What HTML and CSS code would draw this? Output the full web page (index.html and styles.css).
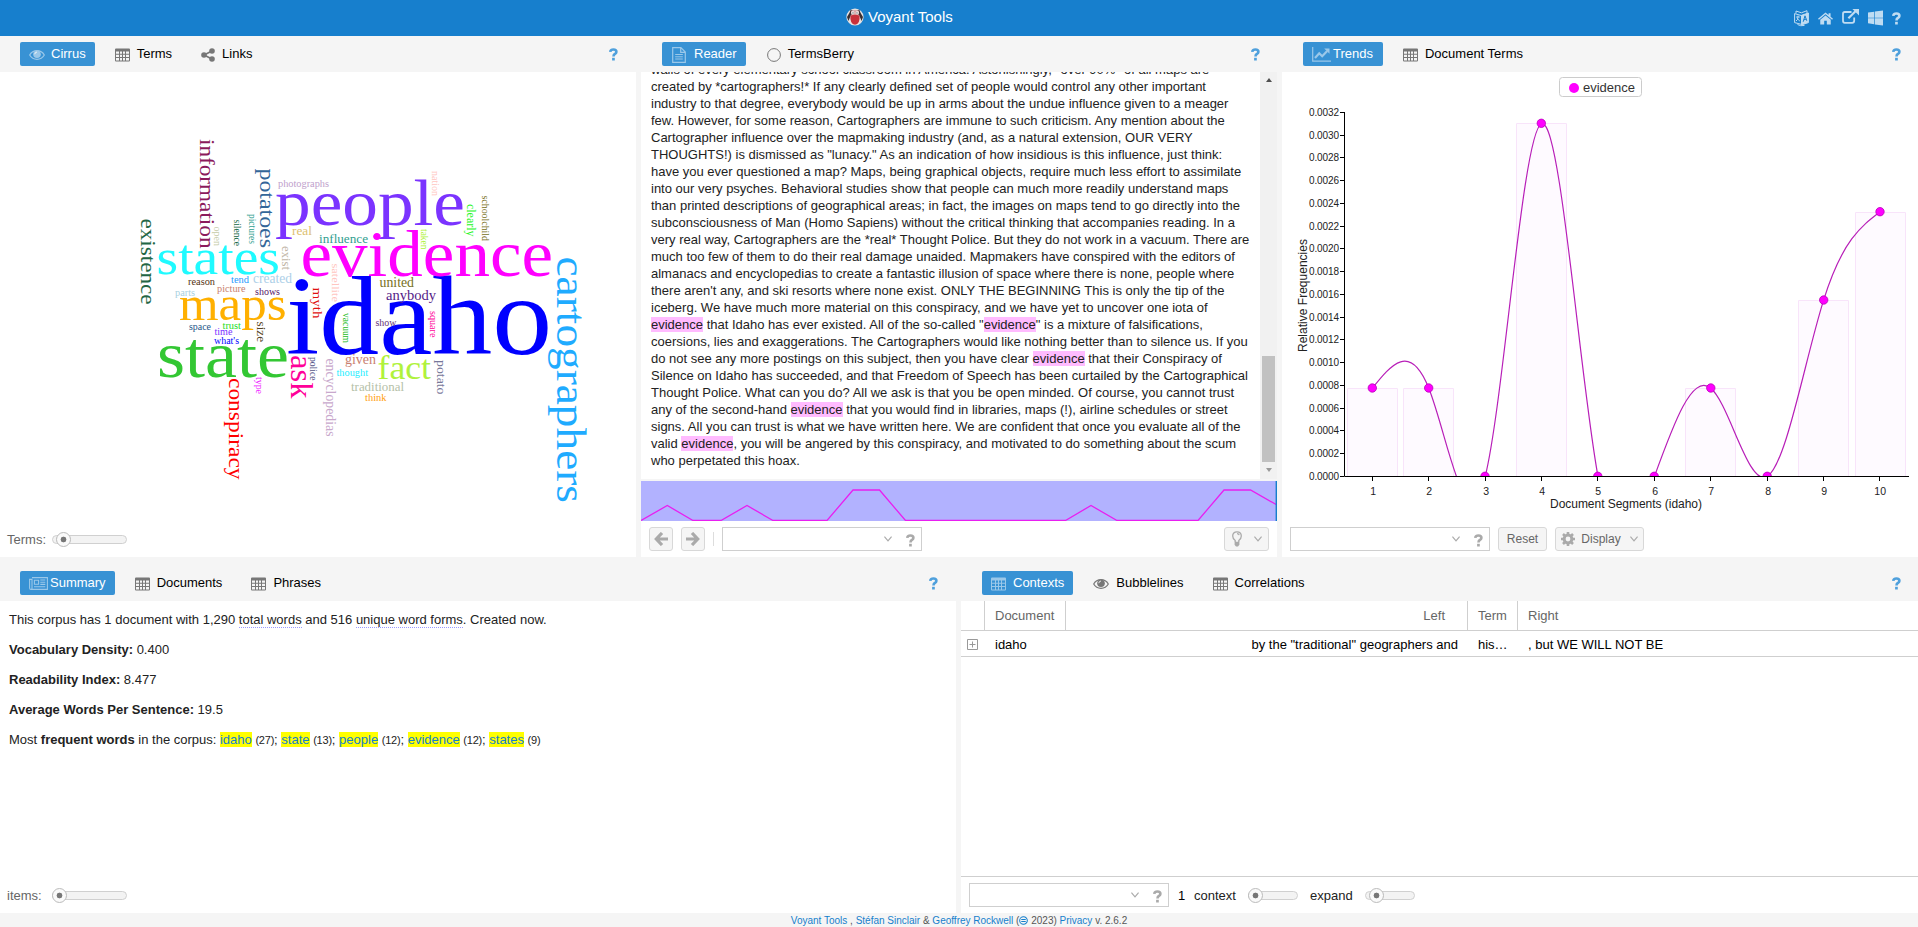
FILE: index.html
```html
<!DOCTYPE html>
<html lang="en">
<head>
<meta charset="utf-8">
<title>Voyant Tools</title>
<link rel="stylesheet" href="styles.css">
</head>
<body>
<svg width="0" height="0" class="defs">
  <defs>
    <symbol id="i-table" viewBox="0 0 15 14"><path fill-rule="evenodd" d="M1 .5h13a1 1 0 0 1 1 1v11a1 1 0 0 1-1 1H1a1 1 0 0 1-1-1v-11a1 1 0 0 1 1-1zM1 3.5v2.3h3v-2.3zM5 3.5v2.3h2v-2.3zM8 3.5v2.3h2v-2.3zM11 3.5v2.3h3v-2.3zM1 6.8v2.3h3v-2.3zM5 6.8v2.3h2v-2.3zM8 6.8v2.3h2v-2.3zM11 6.8v2.3h3v-2.3zM1 10.1v2.4h3v-2.4zM5 10.1v2.4h2v-2.4zM8 10.1v2.4h2v-2.4zM11 10.1v2.4h3v-2.4z"/></symbol>
    <symbol id="i-eye" viewBox="0 0 16 12"><path fill="none" stroke="currentColor" stroke-width="1.2" d="M.7 6C4 .2 12 .2 15.3 6 12 11.8 4 11.8.7 6z"/><circle cx="8" cy="5.3" r="3.8"/><path fill="none" class="glint" stroke-width=".9" d="M5.8 5.2Q5.9 3.2 8 3"/></symbol>
    <symbol id="i-share" viewBox="0 0 14 14"><circle cx="11" cy="3" r="2.8"/><circle cx="11" cy="11" r="2.8"/><circle cx="3" cy="7" r="2.8"/><path fill="none" stroke="currentColor" stroke-width="1.7" d="M11 3 3 7l8 4"/></symbol>
    <symbol id="i-doc" viewBox="0 0 14 16"><path fill="none" stroke="currentColor" stroke-width="1.2" d="M.7.7h8.2l4.4 4.4v10.2H.7zM8.7.9v4.4h4.4"/><path fill="none" stroke="currentColor" stroke-width="1" d="M3.2 7.5h7.6M3.2 9.8h7.6M3.2 12h7.6"/></symbol>
    <symbol id="i-line" viewBox="0 0 19 15"><path fill="none" stroke="currentColor" stroke-width="1.2" d="M.7 0v14.2H19"/><path fill="none" stroke="currentColor" stroke-width="2.2" d="m3 11 4.2-4.7 3 3 5-5.2"/><path d="M12.2 1.5h5.3v5.3z"/></symbol>
    <symbol id="i-news" viewBox="0 0 19 13"><path fill="none" stroke="currentColor" stroke-width="1.1" d="M3 .6h15.4v11.8H1.8Q.6 12.4.6 11V2.4H3v8.8Q3 12.4 1.8 12.4"/><path fill="none" stroke="currentColor" stroke-width="1.1" d="M5.4 3.2h4.2v4H5.4zM11.3 3h5M11.3 5.2h5M11.3 7.4h5M5 9.8h11.3"/></symbol>
    <symbol id="i-help" viewBox="0 0 9 13"><path fill="none" stroke="currentColor" stroke-width="2.6" d="M1.2 3.9Q1.6 1.5 4.4 1.5 7.4 1.5 7.4 3.9 7.4 5.2 5.8 6 4.5 6.7 4.5 8.4"/><path d="M3.1 9.8h2.7v2.7H3.1z"/></symbol>
    <symbol id="i-left" viewBox="0 0 14 14"><path fill="none" stroke="currentColor" stroke-width="3.2" d="M8 1 2.3 7 8 13M2.6 7H14"/></symbol>
    <symbol id="i-bulb" viewBox="0 0 10 16"><path fill="none" stroke="currentColor" stroke-width="1.3" d="M3.2 11V9.6Q.7 7.6.7 5 .7.8 5 .8 9.3.8 9.3 5 9.3 7.6 6.8 9.6V11M5 2.7Q6.8 2.7 7.2 4.2"/><path d="M2.6 10.8h4.8v3L6 15.6H4l-1.4-1.8z"/></symbol>
    <symbol id="i-gear" viewBox="0 0 14 14"><circle cx="7" cy="7" r="3.9" fill="none" stroke="currentColor" stroke-width="3"/><path fill="none" stroke="currentColor" stroke-width="2.6" d="M7 0v3M7 11v3M0 7h3M11 7h3M2 2l2.1 2.1M9.9 9.9 12 12M12 2 9.9 4.1M4.1 9.9 2 12"/></symbol>
    <symbol id="i-chev" viewBox="0 0 8 6"><path fill="none" stroke="currentColor" stroke-width="1.2" d="m.4.6 3.6 4.2L7.6.6"/></symbol>
  </defs>
</svg>

<header class="topbar">
  <div class="brand">
    <svg class="logo" width="18" height="18" viewBox="0 0 18 18"><circle cx="9" cy="9" r="8.6" fill="#e6e2e2"/><path d="M3.4 5 4.8 1.4 7.6 3h2.8l2.8-1.6L14.6 5l2.4 4-1.4 4L13 7H5l-2.6 6L1 9z" fill="#3a3032"/><path d="M5 2.8Q9 1 13 2.8L12.6 7H5.4z" fill="#d9a9a9"/><circle cx="6.8" cy="4.8" r="1.5" fill="#fff"/><circle cx="11.2" cy="4.8" r="1.5" fill="#fff"/><circle cx="7" cy="4.9" r=".6" fill="#222"/><circle cx="11" cy="4.9" r=".6" fill="#222"/><path d="M4.4 7.6Q9 5.8 13.6 7.6 14.2 16.6 9 16.8 3.8 16.6 4.4 7.6z" fill="#c8303a"/></svg>
    <span>Voyant Tools</span>
  </div>
  <div class="tools">
    <svg class="outline" width="15" height="17" viewBox="0 0 15 17" stroke="currentColor"><path d="M.6 3.6 7.5 5.6v8.8L.6 12.6zM2 3.4V1l5.4 1.8L13 .7v3"/><path d="M7.5 5.3 14.4 3v9.6l-6.9 2.3z" fill="currentColor"/><path d="M2.2 7h3.6M4 5.6V7q0 3-2 4M2.8 8.2l3 2.8M3.5 14.5q3 2 7 .9"/><path class="cut" d="m9.2 11.8 1.8-6 1.8 5M9.8 9.8l2.4-.7"/></svg>
    <svg width="15" height="13" viewBox="0 0 16 13"><path d="M8 0 0 6.8l1 1L8 1.9l7 5.9 1-1-2.6-2.3V.9h-2.1v1.8z"/><path d="M8 3.2 2.4 7.9v5.1h4.2V9h2.8v4h4.2V7.9z"/></svg>
    <svg class="ext" width="17" height="15" viewBox="0 0 17 15"><path fill="none" stroke="currentColor" stroke-width="1.8" d="M9.5 3H2.8Q1 3 1 4.8v7Q1 13.8 2.8 13.8h7.4q2 0 2-2V8.6"/><path fill="none" stroke="currentColor" stroke-width="2.2" d="M6.4 9.2 14 1.8"/><path d="M10.4 0H17v6.6z"/></svg>
    <svg width="15" height="16" viewBox="0 0 16 16"><path d="M0 2.2 6.6 1.2v6.4H0zM7.3 1.1 16 0v7.6H7.3zM0 8.3h6.6v6.3L0 13.7zM7.3 8.3H16V16l-8.7-1.2z"/></svg>
    <svg width="9" height="13"><use href="#i-help"/></svg>
  </div>
</header>

<main class="rows">
  <section class="row row-top">
    <article class="panel">
      <nav class="tabs">
        <a class="tab active"><svg width="16" height="12"><use href="#i-eye"/></svg>Cirrus</a>
        <a class="tab"><svg width="15" height="14"><use href="#i-table"/></svg>Terms</a>
        <a class="tab"><svg width="14" height="14"><use href="#i-share"/></svg>Links</a>
        <svg class="help" width="9" height="13"><use href="#i-help"/></svg>
      </nav>
      <div class="body">
        <svg class="cloud" width="636" height="449" viewBox="0 72 636 449">
          <g id="cloud"></g>
        </svg>
      </div>
      <div class="toolbar"><span class="label">Terms:</span><span class="slider" style="width:75px"><i style="left:3px"></i></span></div>
    </article>

    <article class="panel">
      <nav class="tabs inset">
        <a class="tab active roomy"><svg width="14" height="16"><use href="#i-doc"/></svg>Reader</a>
        <a class="tab"><svg class="outline" width="14" height="14" viewBox="0 0 14 14"><circle cx="7" cy="7" r="6.4" stroke="currentColor"/></svg>TermsBerry</a>
        <svg class="help" width="9" height="13"><use href="#i-help"/></svg>
      </nav>
      <div class="reader">
        <p class="text">walls of every elementary school classroom in America. Astonishingly, *over 90%* of all maps are<br>
created by *cartographers!* If any clearly defined set of people would control any other important<br>
industry to that degree, everybody would be up in arms about the undue influence given to a meager<br>
few. However, for some reason, Cartographers are immune to such criticism. Any mention about the<br>
Cartographer influence over the mapmaking industry (and, as a natural extension, OUR VERY<br>
THOUGHTS!) is dismissed as "lunacy." As an indication of how insidious is this influence, just think:<br>
have you ever questioned a map? Maps, being graphical objects, require much less effort to assimilate<br>
into our very psyches. Behavioral studies show that people can much more readily understand maps<br>
than printed descriptions of geographical areas; in fact, the images on maps tend to go directly into the<br>
subconsciousness of Man (Homo Sapiens) without the critical thinking that accompanies reading. In a<br>
very real way, Cartographers are the *real* Thought Police. But they do not work in a vacuum. There are<br>
much too few of them to do their real damage unaided. Mapmakers have conspired with the editors of<br>
almanacs and encyclopedias to create a fantastic illusion of space where there is none, people where<br>
there aren't any, and ski resorts where none exist. ONLY THE BEGINNING This is only the tip of the<br>
iceberg. We have much more material on this conspiracy, and we have yet to uncover one iota of<br>
<mark>evidence</mark> that Idaho has ever existed. All of the so-called "<mark>evidence</mark>" is a mixture of falsifications,<br>
coersions, lies and exaggerations. The Cartographers would like nothing better than to silence us. If you<br>
do not see any more postings on this subject, then you have clear <mark>evidence</mark> that their Conspiracy of<br>
Silence on Idaho has succeeded, and that Freedom of Speech has been curtailed by the Cartographical<br>
Thought Police. What can you do? All we ask is that you be open minded. Of course, you cannot trust<br>
any of the second-hand <mark>evidence</mark> that you would find in libraries, maps (!), airline schedules or street<br>
signs. All you can trust is what we have written here. We are confident that once you evaluate all of the<br>
valid <mark>evidence</mark>, you will be angered by this conspiracy, and motivated to do something about the scum<br>
who perpetated this hoax.</p>
        <div class="scrollbar"><b class="up"></b><i></i><b class="down"></b></div>
      </div>
      <svg class="mini" width="636" height="40" viewBox="641 481 636 40"><path fill="none" stroke="#e81ff0" stroke-width="1.3" d="M641 520.5 667.3 505.5 693 520.5H721L747 505.5 773 520.5H827L853 490H879.5L905.5 520.5H1065.5L1091 505.5 1117 520.5H1198L1224 490H1250.5L1277 505"/><path d="M1276.3 481v40" stroke="#157fcc" stroke-width="1.4"/></svg>
      <div class="toolbar reader-bar">
        <span class="btn sq"><svg width="14" height="14"><use href="#i-left"/></svg></span>
        <span class="btn sq"><svg class="flip" width="14" height="14"><use href="#i-left"/></svg></span>
        <span class="sep"></span>
        <span class="combo"><svg width="8" height="6"><use href="#i-chev"/></svg><svg width="9" height="13"><use href="#i-help"/></svg></span>
        <span class="btn bulb"><svg width="10" height="16"><use href="#i-bulb"/></svg><svg width="8" height="6"><use href="#i-chev"/></svg></span>
      </div>
    </article>

    <article class="panel">
      <nav class="tabs inset">
        <a class="tab active tight"><svg width="19" height="15"><use href="#i-line"/></svg>Trends</a>
        <a class="tab"><svg width="15" height="14"><use href="#i-table"/></svg>Document Terms</a>
        <svg class="help" width="9" height="13"><use href="#i-help"/></svg>
      </nav>
      <div class="body">
        <svg class="chart" width="636" height="449" viewBox="1282 72 636 449">
          <defs><clipPath id="plot"><path d="M1344 100h566v376.5h-566z"/></clipPath></defs>
          <rect x="1559.5" y="77.5" width="82" height="19" rx="3" fill="#fff" stroke="#ccc"/>
          <circle cx="1574" cy="88" r="5" fill="#f0f"/>
          <text x="1583" y="92" class="legend" textLength="52">evidence</text>
          <g fill="#fefaff" stroke="#f8e4fa">
            <path d="M1347.5 476v-87.5h50v87.5M1403.5 476v-87.5h50v87.5M1516.5 476V123.5h50V476M1685.5 476v-87.5h50v87.5M1798.5 476V300.5h50V476M1855.5 476V212.5h50V476"/>
          </g>
          <g clip-path="url(#plot)">
            <path fill="none" stroke="#b81fb8" stroke-width="1.2" d="M1372.3 388.3C1391.2 364.8 1410 341.3 1428.8 388.3C1447.6 435.3 1466.4 552.7 1485.2 476.5C1504 400.3 1522.8 130.3 1541.6 123.7C1560.4 117.1 1579.2 373.7 1598 476.5C1616.8 579.3 1635.6 528.2 1654.4 476.5C1673.2 424.8 1692 372.6 1710.8 388.3C1729.6 404 1748.4 487.5 1767.2 476.5C1786 465.5 1804.8 360 1823.6 300.1C1842.4 240.2 1861.2 226.1 1880 211.9"/>
            <g fill="#f0f" stroke="#b800b8" stroke-width=".8"><circle cx="1372.3" cy="388" r="4.2"/><circle cx="1428.7" cy="388" r="4.2"/><circle cx="1485" cy="476.3" r="4.2"/><circle cx="1541.3" cy="123.3" r="4.2"/><circle cx="1597.8" cy="476.3" r="4.2"/><circle cx="1654.2" cy="476.3" r="4.2"/><circle cx="1710.8" cy="388" r="4.2"/><circle cx="1767.2" cy="476.3" r="4.2"/><circle cx="1823.7" cy="300" r="4.2"/><circle cx="1880" cy="211.7" r="4.2"/></g>
          </g>
          <path d="M1344.5 112v364.5H1909" fill="none" stroke="#000"/>
          <g id="axes"></g>
          <text class="title" x="1626" y="508" text-anchor="middle" textLength="152">Document Segments (idaho)</text>
          <text class="title" transform="translate(1307 295.5) rotate(-90)" text-anchor="middle" textLength="113">Relative Frequencies</text>
        </svg>
      </div>
      <div class="toolbar trends-bar">
        <span class="combo"><svg width="8" height="6"><use href="#i-chev"/></svg><svg width="9" height="13"><use href="#i-help"/></svg></span>
        <span class="btn reset">Reset</span>
        <span class="btn display"><svg width="14" height="14"><use href="#i-gear"/></svg>Display<svg width="8" height="6"><use href="#i-chev"/></svg></span>
      </div>
    </article>
  </section>

  <section class="row row-bottom">
    <article class="panel">
      <nav class="tabs">
        <a class="tab active tight"><svg width="19" height="13"><use href="#i-news"/></svg>Summary</a>
        <a class="tab"><svg width="15" height="14"><use href="#i-table"/></svg>Documents</a>
        <a class="tab"><svg width="15" height="14"><use href="#i-table"/></svg>Phrases</a>
        <svg class="help" width="9" height="13"><use href="#i-help"/></svg>
      </nav>
      <div class="body summary">
        <p>This corpus has 1 document with 1,290 <u>total words</u> and 516 <u>unique word forms</u>. Created now.</p>
        <p><b>Vocabulary Density:</b> 0.400</p>
        <p><b>Readability Index:</b> 8.477</p>
        <p><b>Average Words Per Sentence:</b> 19.5</p>
        <p>Most <b>frequent words</b> in the corpus: <a>idaho</a> <small>(27)</small>; <a>state</a> <small>(13)</small>; <a>people</a> <small>(12)</small>; <a>evidence</a> <small>(12)</small>; <a>states</a> <small>(9)</small></p>
      </div>
      <div class="toolbar"><span class="label">items:</span><span class="slider" style="width:75px"><i style="left:-1px"></i></span></div>
    </article>

    <article class="panel">
      <nav class="tabs inset">
        <a class="tab active"><svg width="15" height="14"><use href="#i-table"/></svg>Contexts</a>
        <a class="tab"><svg width="16" height="12"><use href="#i-eye"/></svg>Bubblelines</a>
        <a class="tab"><svg width="15" height="14"><use href="#i-table"/></svg>Correlations</a>
        <svg class="help" width="9" height="13"><use href="#i-help"/></svg>
      </nav>
      <div class="body">
        <div class="grid head"><span></span><span>Document</span><span class="r">Left</span><span>Term</span><span>Right</span></div>
        <div class="grid line"><span class="expander"><svg class="outline" width="11" height="11" viewBox="0 0 11 11" stroke="#999"><path d="M.5.5h10v10H.5zM2.5 5.5h6M5.5 2.5v6"/></svg></span><span>idaho</span><span class="r">by the "traditional" geographers and</span><span>his…</span><span>, but WE WILL NOT BE</span></div>
      </div>
      <div class="toolbar contexts-bar">
        <span class="combo"><svg width="8" height="6"><use href="#i-chev"/></svg><svg width="9" height="13"><use href="#i-help"/></svg></span>
        <span class="count">1</span><span class="ctx">context</span><span class="slider" style="width:50px"><i style="left:-1px"></i></span>
        <span class="exp">expand</span><span class="slider" style="width:50px"><i style="left:3px"></i></span>
      </div>
    </article>
  </section>
</main>

<footer class="foot"><a>Voyant Tools</a> , <a>Stéfan Sinclair</a> &amp; <a>Geoffrey Rockwell</a> (<svg class="outline" width="9" height="9" viewBox="0 0 8 8" stroke="#157fcc" stroke-width=".9"><circle cx="4" cy="4" r="3.4"/><path d="M2 3.2h4M2 4.8h4"/></svg> 2023) <a>Privacy</a> v. 2.6.2</footer>
<script src="app.js"></script>
</body>
</html>
```

FILE: styles.css
```css
* { box-sizing: border-box; }
body { margin: 0; width: 1918px; height: 927px; overflow: hidden; display: flex; flex-direction: column; background: #f5f5f5; font: 13px/17px "Liberation Sans", Arial, sans-serif; color: #222; }
svg { flex: none; fill: currentColor; }
svg.outline { fill: none; }
.defs { position: absolute; }
.topbar { height: 36px; flex: none; display: flex; align-items: center; justify-content: flex-end; position: relative; background: #177fcd; color: #fff; padding-right: 17px; }
.brand { position: absolute; left: 846px; top: 8px; height: 18px; display: flex; align-items: center; gap: 4px; font-size: 15px; white-space: nowrap; }
.brand span { margin-top: -2px; }
.tools { display: flex; align-items: center; gap: 9px; color: #bfdcf2; }
.tools .cut { stroke: #177fcd; }
.tools .ext { margin-top: -3px; }
.rows { height: 877px; display: flex; flex-direction: column; gap: 8px; }
.row { display: grid; }
.row-top { height: 521px; grid-template-columns: 636px 636px 636px; gap: 5px; }
.row-bottom { height: 348px; grid-template-columns: 956px 957px; gap: 5px; }
.panel { display: flex; flex-direction: column; min-width: 0; background: #fff; }
.tabs { height: 36px; flex: none; display: flex; align-items: center; gap: 11px; background: #f5f5f5; padding: 0 18px 0 20px; }
.tabs.inset { padding: 0 17px 0 21px; }
.tab { height: 24px; display: flex; align-items: center; gap: 7px; padding: 0 9px 2px; color: #000; border-radius: 2px; }
.tab svg { color: #777; margin-top: 3px; }
.tab.active { background: #3892d4; color: #fff; gap: 6px; }
.tab.active svg { color: #9bc8e9; }
.inset .tab.active { gap: 7px; }
.tabs .tab.tight { gap: 2px; padding-right: 10px; }
.row-bottom .tab.tight { padding-right: 9px; }
.tabs .tab.roomy { gap: 8px; padding-left: 10px; margin-right: 1px; }
.glint { stroke: #f5f5f5; }
.active .glint { stroke: #3892d4; }
.help { margin-left: auto; margin-top: 1px; color: #4fa0dc; }
.body { flex: 1; min-height: 0; overflow: hidden; }
.body > svg { display: block; }
.cloud text { font-family: "Palatino Linotype", Palatino, "Liberation Serif", serif; }
.reader { height: 407px; display: flex; overflow: hidden; background: #fff; }
.text { flex: 1; margin: -11px 0 0 10px; white-space: nowrap; line-height: 17px; color: #222; }
mark { background: #fbf; color: inherit; }
.scrollbar { width: 17px; display: flex; flex-direction: column; align-items: center; background: #f1f1f1; padding: 6px 0 7px; }
.scrollbar i { width: 13px; height: 106px; margin-top: auto; margin-bottom: 6px; background: #c1c1c1; }
.up, .down { border: 3.5px solid transparent; border-top: 0; border-bottom: 4px solid #505050; height: 0; }
.down { border-bottom: 0; border-top: 4px solid #999; }
.mini { display: block; margin-top: 2px; background: #b2b2ff; box-shadow: 0 -2px #f5f5f5; }
.toolbar { height: 36px; flex: none; display: flex; align-items: center; padding: 0 8px 0 7px; color: #666; }
.label { width: 45px; }
.slider { height: 9px; position: relative; border: 1px solid #d0d0d0; border-radius: 5px; background: #f3f3f3; }
.slider i { position: absolute; top: -4px; width: 15px; height: 15px; border: 1px solid #bbb; border-radius: 50%; background: radial-gradient(circle, #777 0 2.6px, #fafafa 3.2px); }
.btn { height: 24px; display: flex; align-items: center; justify-content: center; border: 1px solid #d8d8d8; border-radius: 3px; background: #f5f5f5; color: #666; font-size: 12px; }
.btn svg, .combo svg { color: #aaa; }
.sq { width: 24px; margin-right: 8px; }
.flip { transform: scaleX(-1); }
.sep { width: 1px; height: 14px; background: #ddd; margin-right: 8px; }
.combo { width: 200px; height: 24px; display: flex; align-items: center; justify-content: flex-end; gap: 14px; padding-right: 6px; border: 1px solid #cfcfcf; background: #fff; }
.combo svg + svg { margin-top: 3px; }
.reader-bar { padding-left: 8px; }
.bulb { width: 45px; margin-left: auto; gap: 12px; }
.trends-bar { gap: 8px; padding-left: 8px; }
.reset { width: 49px; }
.display { width: 89px; gap: 6px; }
.display svg + svg { margin-left: 3px; }
.chart text { font-family: "Liberation Sans", Arial, sans-serif; fill: #222; }
.chart .legend { font-size: 13px; fill: #333; }
.chart .title { font-size: 12px; }
.chart .tick { font-size: 10px; }
.chart .seg { font-size: 10.5px; }
.summary { padding: 10px 9px; }
.summary p { margin: 0 0 13px; }
.summary u { text-decoration: none; border-bottom: 1px dotted #99f; }
.summary a { background: #ff0; color: #157fcc; }
.summary small { font-size: 11px; letter-spacing: -.22px; }
.grid { display: grid; grid-template-columns: 24px 81px 402px 50px 400px; white-space: nowrap; }
.head { height: 30px; color: #666; border-bottom: 1px solid #cfcfcf; }
.head span { border-right: 1px solid #cfcfcf; padding: 6px 0 0 10px; }
.head span:last-child { border: 0; }
.head .r { text-align: right; padding-right: 22px; }
.line { height: 26px; color: #000; border-bottom: 1px solid #cfcfcf; }
.line span { padding: 5px 0 0 10px; }
.line .r { text-align: right; padding-right: 10px; }
.line .expander { padding: 8px 0 0 6px; }
.expander svg { display: block; }
.contexts-bar { height: 37px; border-top: 1px solid #cfcfcf; padding-left: 8px; color: #222; }
.count { width: 16px; margin-left: 9px; color: #000; }
.ctx, .exp { width: 54px; }
.exp { margin-left: 12px; width: 55px; }
.foot { height: 14px; text-align: center; font-size: 10px; line-height: 16px; color: #555; white-space: nowrap; }
.foot a { color: #157fcc; }
.foot svg { vertical-align: -1px; }
```

FILE: app.js
```js
const NS = "http://www.w3.org/2000/svg";

function addText(parent, str, attrs) {
  const t = document.createElementNS(NS, "text");
  for (const k in attrs) t.setAttribute(k, attrs[k]);
  t.textContent = str;
  parent.appendChild(t);
}

// word, x start, x end, baseline, size, colour
const across = [
  ["idaho", 286, 552, 353.5, 112, "#0000ff"],
  ["people", 275, 465, 225, 65, "#7b33ff"],
  ["evidence", 300.5, 553, 276, 66, "#ff00ff"],
  ["states", 156.5, 280, 274, 51, "#1ffaff"],
  ["maps", 179, 286.5, 320, 48, "#ffb000"],
  ["state", 157, 289, 377, 66, "#33c733"],
  ["fact", 377.5, 431, 379, 33, "#b0f23c"],
  ["created", 253, 292, 283, 14, "#add0e8"],
  ["tend", 231, 249, 282.5, 11, "#1f9bff"],
  ["reason", 188, 215, 285, 10.5, "#553311"],
  ["picture", 217, 245.5, 292, 11, "#c97f70"],
  ["parts", 175, 195, 295.5, 10.5, "#a8d0e0"],
  ["shows", 255, 280, 295, 10.5, "#551166"],
  ["space", 189, 211, 330, 10.5, "#225588"],
  ["time", 214.5, 232.5, 334.5, 10.5, "#7733ff"],
  ["trust", 222.5, 241, 328.5, 10.5, "#22dd22"],
  ["what's", 214, 239, 343.5, 10.5, "#0000ff"],
  ["real", 292, 312, 234.5, 12.5, "#ddc070"],
  ["photographs", 278, 329, 187, 11, "#c0a0cc"],
  ["influence", 319, 368, 242.5, 13.5, "#30a090"],
  ["united", 379.5, 414, 287, 14, "#777022"],
  ["anybody", 386, 436, 299.5, 14, "#552288"],
  ["show", 375.5, 396.5, 325.5, 10.5, "#663377"],
  ["given", 345, 376, 364, 14, "#c97f70"],
  ["thought", 336.5, 368, 376, 10.5, "#22eeff"],
  ["traditional", 351, 404, 390.5, 12.5, "#b5bfa8"],
  ["think", 365, 386.5, 400.5, 10.5, "#ffa010"]
];
// word, y start, y end, baseline x, size, colour
const down = [
  ["existence", 218.5, 304.5, 140.5, 22, "#226644"],
  ["information", 139, 248.5, 199.5, 21, "#8b1a5c"],
  ["open", 226.5, 246, 214, 10.5, "#c5cba8"],
  ["silence", 219.5, 246, 233.5, 10.5, "#116644"],
  ["pictures", 214, 244, 249.3, 10.5, "#30a090"],
  ["potatoes", 168.5, 248, 259.5, 20, "#336699"],
  ["exist", 246, 270, 282.3, 13, "#c0b5a5"],
  ["satellite", 263.5, 302, 331.7, 11, "#ffc5c0"],
  ["myth", 287.5, 318.5, 313.3, 12.5, "#e01010"],
  ["vacuum", 313, 343, 342.8, 10.5, "#22bb22"],
  ["size", 321.5, 342, 257.3, 12, "#554422"],
  ["type", 377, 394, 256.3, 10.5, "#ee22ff"],
  ["conspiracy", 378, 479.5, 229, 21, "#ff0000"],
  ["ask", 355, 398.5, 290.5, 31, "#ff0099"],
  ["police", 357, 380.5, 309.8, 10.5, "#555588"],
  ["encyclopedias", 358.5, 436.5, 325.6, 14, "#c8a8cc"],
  ["nation", 171, 196, 431.8, 10.5, "#ffc5c0"],
  ["clearly", 204, 236.5, 467.3, 13, "#22f522"],
  ["schoolchild", 195.5, 241, 481.8, 10.5, "#777022"],
  ["taken", 229, 249.5, 421.3, 10.5, "#b0f23c"],
  ["square", 311, 337.5, 430.3, 10.5, "#ff0099"],
  ["potato", 360, 394.5, 437.2, 13, "#777799"],
  ["cartographers", 256.5, 503, 557.3, 42, "#1fabff"]
];
const cloud = document.getElementById("cloud");
for (const [w, a, b, base, size, fill] of across)
  addText(cloud, w, { x: a, y: base, "font-size": size, fill, textLength: b - a, lengthAdjust: "spacingAndGlyphs" });
for (const [w, a, b, base, size, fill] of down)
  addText(cloud, w, { transform: `translate(${base} ${a}) rotate(90)`, "font-size": size, fill, textLength: b - a, lengthAdjust: "spacingAndGlyphs" });

const axes = document.getElementById("axes");
let ticks = "";
for (let i = 0; i <= 16; i++) {
  const y = Math.floor(476.4 - i * 22.75) + 0.5;
  ticks += `M1340 ${y}h4`;
  addText(axes, (i * 0.0002).toFixed(4), { x: 1339, y: y + 3, "text-anchor": "end", class: "tick", textLength: 30 });
}
for (let i = 1; i <= 10; i++) {
  const x = Math.floor(1315.8 + i * 56.4) + 0.5;
  ticks += `M${x} 477v4`;
  addText(axes, String(i), { x: x + 0.7, y: 494.5, "text-anchor": "middle", class: "seg" });
}
const p = document.createElementNS(NS, "path");
p.setAttribute("d", ticks);
p.setAttribute("stroke", "#000");
axes.appendChild(p);
```
